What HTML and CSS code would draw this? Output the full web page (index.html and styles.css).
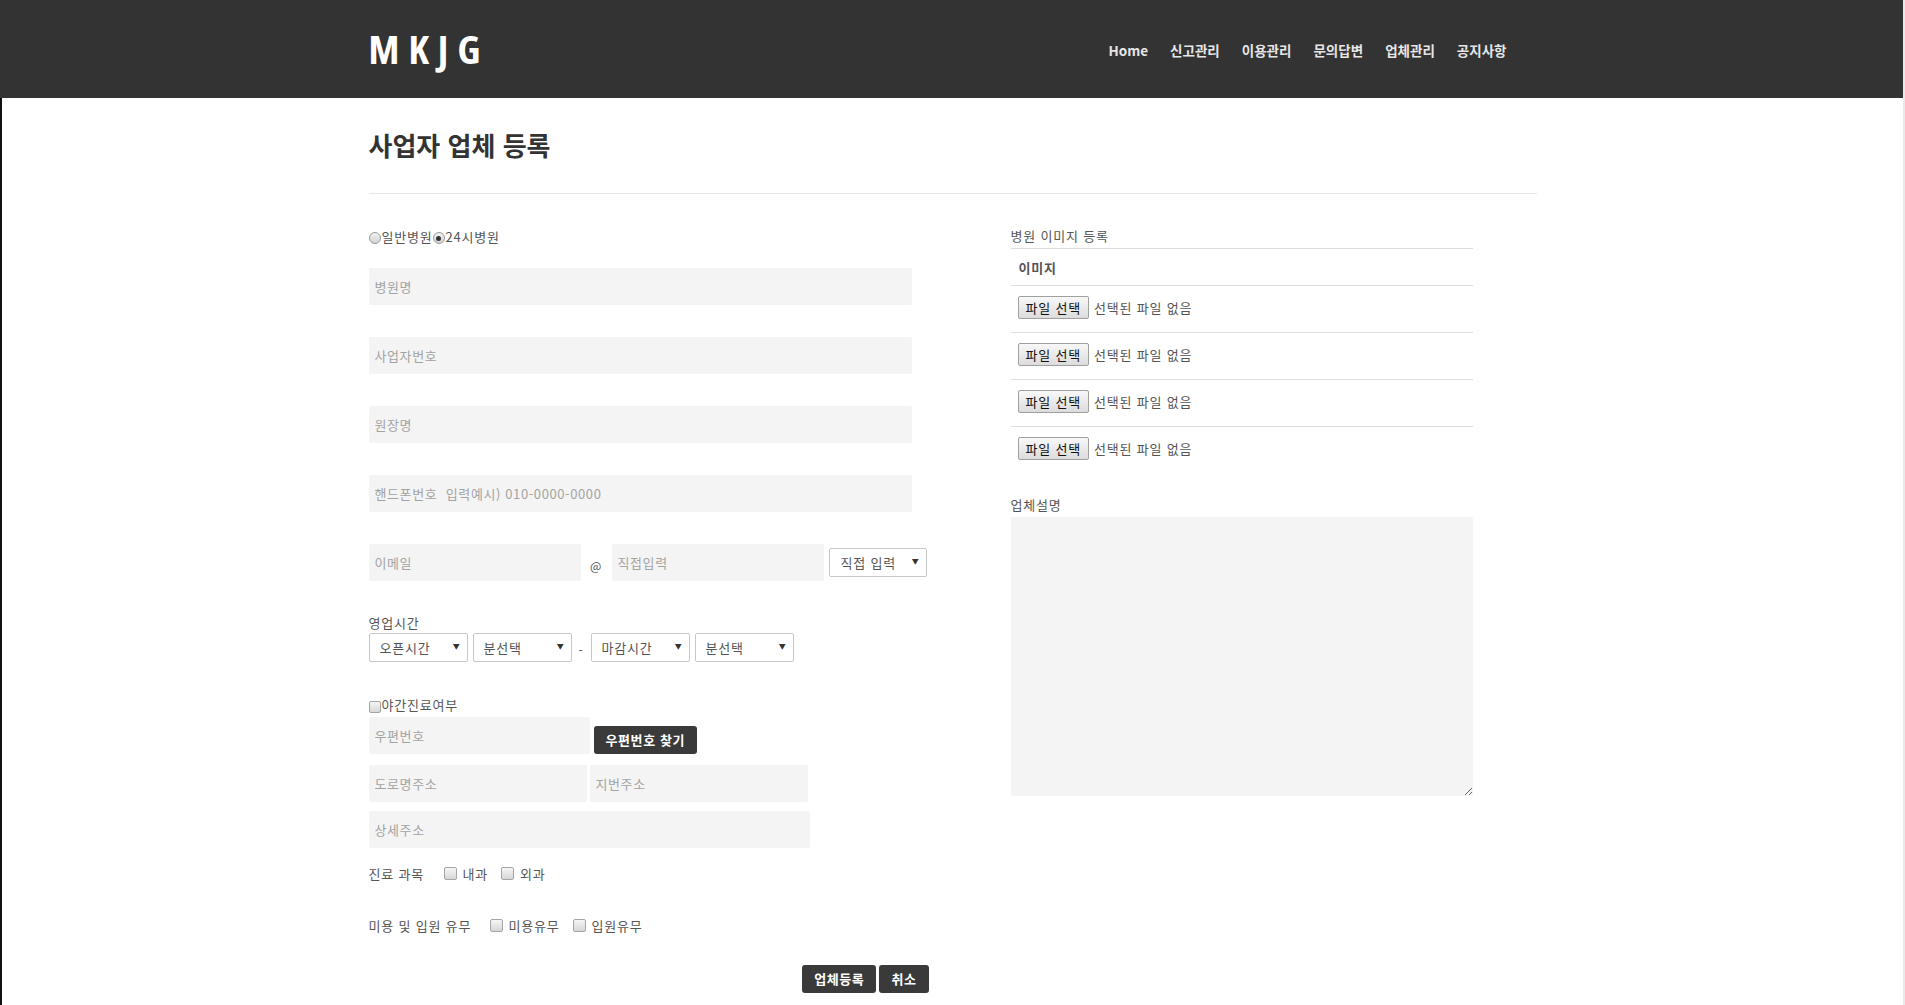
FILE: index.html
```html
<!DOCTYPE html>
<html lang="ko">
<head>
<meta charset="utf-8">
<title>사업자 업체 등록</title>
<link rel="stylesheet" href="styles.css">
</head>
<body>
<header class="topbar">
  <div class="topbar-inner">
    <a class="logo" href="#">MKJG</a>
    <nav class="gnb">
      <a href="#">Home</a>
      <a href="#">신고관리</a>
      <a href="#">이용관리</a>
      <a href="#">문의답변</a>
      <a href="#">업체관리</a>
      <a href="#">공지사항</a>
    </nav>
  </div>
</header>
<main class="wrap">
  <div class="container">
    <h1 class="page-title">사업자 업체 등록</h1>
    <hr class="divider">
    <form class="reg-form">
      <div class="col-left">
        <div class="radio-row">
          <label class="radio"><input type="radio" name="kind"><span>일반병원</span></label>
          <label class="radio"><input type="radio" name="kind" checked><span>24시병원</span></label>
        </div>
        <input class="field wide" type="text" placeholder="병원명">
        <input class="field wide" type="text" placeholder="사업자번호">
        <input class="field wide" type="text" placeholder="원장명">
        <input class="field wide" type="text" placeholder="핸드폰번호  입력예시) 010-0000-0000">
        <div class="email-row">
          <input class="field email" type="text" placeholder="이메일">
          <span class="at">@</span>
          <input class="field email" type="text" placeholder="직접입력">
          <span class="sel sel-mail"><select><option>직접 입력</option></select></span>
        </div>
        <div class="hours">
          <div class="label">영업시간</div>
          <div class="hours-row">
            <span class="sel"><select><option>오픈시간</option></select></span>
            <span class="sel"><select><option>분선택</option></select></span>
            <span class="dash">-</span>
            <span class="sel"><select><option>마감시간</option></select></span>
            <span class="sel"><select><option>분선택</option></select></span>
          </div>
        </div>
        <label class="check-line"><input class="cb" type="checkbox"><span>야간진료여부</span></label>
        <div class="zip-row">
          <input class="field zip" type="text" placeholder="우편번호">
          <button type="button" class="btn-dark">우편번호 찾기</button>
        </div>
        <div class="addr-row">
          <input class="field addr" type="text" placeholder="도로명주소">
          <input class="field addr" type="text" placeholder="지번주소">
        </div>
        <input class="field detail" type="text" placeholder="상세주소">
        <div class="opt-row opt-dept">
          <span class="opt-title">진료 과목</span>
          <label class="opt"><input class="cb" type="checkbox"><span>내과</span></label>
          <label class="opt"><input class="cb" type="checkbox"><span>외과</span></label>
        </div>
        <div class="opt-row opt-beauty">
          <span class="opt-title">미용 및 입원 유무</span>
          <label class="opt"><input class="cb" type="checkbox"><span>미용유무</span></label>
          <label class="opt"><input class="cb" type="checkbox"><span>입원유무</span></label>
        </div>
        <div class="actions">
          <button type="button" class="btn-dark">업체등록</button>
          <button type="button" class="btn-dark">취소</button>
        </div>
      </div>
      <div class="col-right">
        <div class="label">병원 이미지 등록</div>
        <table class="img-table">
          <thead><tr><th>이미지</th></tr></thead>
          <tbody>
            <tr><td><span class="filebtn">파일 선택</span><span class="filename">선택된 파일 없음</span></td></tr>
            <tr><td><span class="filebtn">파일 선택</span><span class="filename">선택된 파일 없음</span></td></tr>
            <tr><td><span class="filebtn">파일 선택</span><span class="filename">선택된 파일 없음</span></td></tr>
            <tr><td><span class="filebtn">파일 선택</span><span class="filename">선택된 파일 없음</span></td></tr>
          </tbody>
        </table>
        <div class="label desc-label">업체설명</div>
        <textarea class="desc"></textarea>
      </div>
    </form>
  </div>
</main>
</body>
</html>
```
FILE: styles.css
```css
* { box-sizing: border-box; }
html, body { margin: 0; padding: 0; }
body {
  font-family: "Noto Sans CJK KR", "Noto Sans", sans-serif;
  font-size: 13px;
  letter-spacing: 0.8px;
  color: #555;
  background: #fff;
  min-height: 1005px;
  border-right: 2px solid #eaeaea;
}
a { text-decoration: none; }

.topbar {
  background: #333;
  height: 98px;
}
.topbar-inner {
  width: 1170px;
  height: 98px;
  margin: 0 auto;
  display: flex;
  align-items: center;
  justify-content: space-between;
}
.logo {
  color: #fff;
  font-family: "Open Sans", "Noto Sans", sans-serif;
  font-weight: 700;
  font-size: 40px;
  font-stretch: 75%;
  letter-spacing: 9px;
  line-height: 1;
  margin-left: 2px;
}
.gnb {
  display: flex;
  gap: 22px;
  padding-right: 30px;
  margin-top: 2px;
}
.gnb a {
  color: #e6e6e6;
  font-weight: 700;
  font-size: 13.5px;
  letter-spacing: 0;
  line-height: 16px;
}

.wrap {
  border-left: 2px solid #111;
  min-height: 907px;
}
.container {
  width: 1170px;
  margin: 0 auto;
  position: relative;
  left: 1px;
}
.page-title {
  margin: 0;
  padding-top: 32px;
  font-size: 26px;
  letter-spacing: 0;
  line-height: 30px;
  font-weight: 700;
  color: #333;
  height: 95px;
}
.divider {
  border: 0;
  border-top: 1px solid #e8e8e8;
  margin: 0;
  width: 1168px;
}

.reg-form {
  display: grid;
  grid-template-columns: 560px 462px;
  column-gap: 82px;
  padding-top: 34px;
}

.col-left { display: flex; flex-direction: column; align-items: flex-start; }

.radio-row {
  display: flex;
  align-items: center;
  height: 16px;
  margin-top: 1px;
  line-height: 16px;
}
.radio { display: flex; align-items: center; }
.radio input {
  appearance: none;
  -webkit-appearance: none;
  width: 12px;
  height: 12px;
  margin: 2px 1px 0 0;
  border: 1px solid #9a9a9a;
  border-radius: 50%;
  background: linear-gradient(#f2f2f2, #d4d4d4);
  position: relative;
}
.radio input:checked::after {
  content: "";
  position: absolute;
  left: 2.5px; top: 2.5px;
  width: 5px; height: 5px;
  border-radius: 50%;
  background: #333;
}

.field {
  display: block;
  height: 37px;
  border: 0;
  border-radius: 2px;
  background: #f4f4f4;
  padding: 0 6px;
  font-family: inherit;
  font-size: 13px;
  letter-spacing: 0.6px;
  color: #555;
  outline: none;
}
.field::placeholder { color: #a3a3a3; }
.wide { width: 543px; margin-bottom: 32px; }
.radio-row + .wide { margin-top: 23px; }

.email-row {
  display: flex;
  align-items: center;
  height: 37px;
}
.email { width: 212px; }
.at {
  width: 31px;
  text-align: center;
  font-size: 12px;
  color: #555;
  padding-top: 6px;
}
.sel { position: relative; display: inline-block; }
.sel select {
  appearance: none;
  -webkit-appearance: none;
  width: 99px;
  height: 29px;
  border: 1px solid #c8c8c8;
  border-radius: 2px;
  background: #fff;
  padding: 0 0 0 10px;
  font-family: inherit;
  font-size: 13px;
  letter-spacing: 0.8px;
  color: #555;
  outline: none;
}
.sel::after {
  content: "▼";
  position: absolute;
  right: 7px;
  top: 9px;
  font-size: 7px;
  line-height: 8px;
  color: #333;
  pointer-events: none;
}
.sel-mail { margin-left: 5px; }
.sel-mail select { width: 98px; padding-left: 11px; }

.hours { margin-top: 34px; }
.label { line-height: 16px; color: #555; }
.hours .label { margin-bottom: 2px; }
.hours-row { display: flex; align-items: center; gap: 5px; }
.dash { width: 9px; text-align: center; padding-top: 4px; font-size: 12px; }

.check-line {
  display: flex;
  align-items: center;
  margin-top: 35px;
  height: 16px;
  line-height: 16px;
}
.cb {
  appearance: none;
  -webkit-appearance: none;
  width: 12px;
  height: 12px;
  margin: 0;
  border: 1px solid #a5a5a5;
  border-radius: 2px;
  background: linear-gradient(#f6f6f6, #d6d6d6);
}
.check-line .cb { margin: 3px 1px 0 0; width: 12px; height: 12px; }

.zip-row {
  display: flex;
  align-items: flex-end;
  gap: 4px;
  margin-top: 4px;
}
.zip { width: 221px; }
.btn-dark {
  height: 28px;
  padding: 0 12px;
  border: 0;
  border-radius: 3px;
  background: #3a3a3a;
  color: #fff;
  font-family: inherit;
  font-size: 13px;
  letter-spacing: 0.6px;
  font-weight: 700;
  line-height: 28px;
}
.addr-row { display: flex; gap: 3px; margin-top: 11px; }
.addr { width: 218px; }
.detail { width: 441px; margin-top: 9px; }

.opt-row {
  display: flex;
  align-items: center;
  height: 17px;
  line-height: 17px;
  color: #555;
}
.opt-dept { margin-top: 17px; }
.opt-beauty { margin-top: 35px; }
.opt { display: flex; align-items: center; gap: 6px; }
.opt .cb { width: 13px; height: 13px; }
.opt-dept .opt-title { width: 75px; }
.opt-dept .opt + .opt { margin-left: 13px; }
.opt-beauty .opt-title { width: 121px; }
.opt-beauty .opt + .opt { margin-left: 13px; }

.actions {
  align-self: stretch;
  display: flex;
  justify-content: flex-end;
  gap: 3px;
  margin-top: 31px;
}

.col-right { display: flex; flex-direction: column; }
.img-table {
  width: 462px;
  border-collapse: collapse;
  margin-top: 4px;
  border-top: 1px solid #ddd;
}
.img-table th {
  text-align: left;
  font-weight: 700;
  color: #555;
  height: 37px;
  padding: 0 8px;
  border-bottom: 1px solid #ddd;
}
.img-table td {
  height: 47px;
  padding: 0 7px 3px;
  border-bottom: 1px solid #ddd;
}
.img-table tr:last-child td { border-bottom: 0; height: 46px; }
.filebtn {
  display: inline-block;
  height: 23px;
  line-height: 21px;
  padding: 0 7px;
  border: 1px solid #a0a0a0;
  border-radius: 2px;
  background: linear-gradient(#f8f8f8, #dcdcdc);
  color: #111;
  vertical-align: middle;
}
.filename { margin-left: 5px; vertical-align: middle; color: #555; }
.desc-label { margin-top: 24px; margin-bottom: 4px; }
.desc {
  width: 462px;
  height: 279px;
  border: 0;
  border-radius: 2px;
  background: #f4f4f4;
  font-family: inherit;
  font-size: 13px;
  padding: 6px;
  outline: none;
}
```
